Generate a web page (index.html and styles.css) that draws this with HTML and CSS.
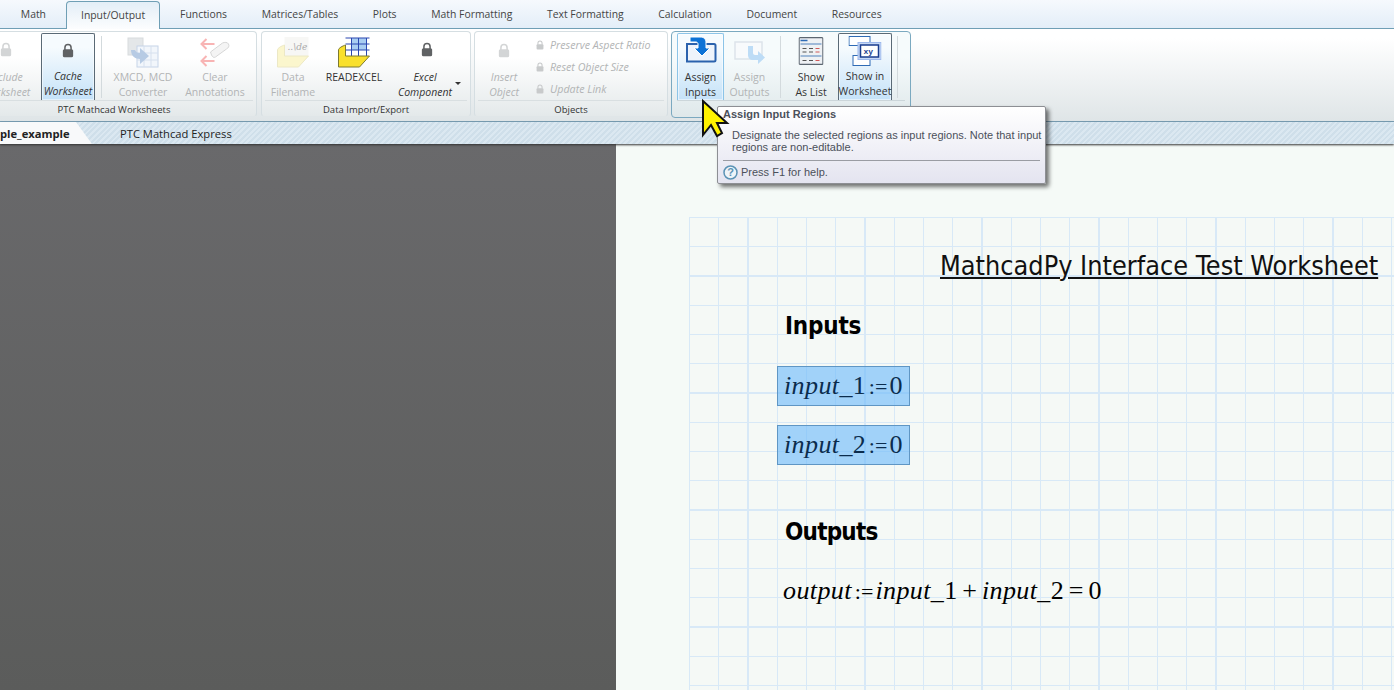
FILE: index.html
```html
<!DOCTYPE html>
<html lang="en">
<head>
<meta charset="utf-8">
<title>PTC Mathcad Express</title>
<link rel="stylesheet" href="styles.css">
</head>
<body>
<svg class="defs" width="0" height="0" aria-hidden="true">
  <symbol id="lock" viewBox="0 0 14 17">
    <path d="M3.4 8V5.2a3.6 3.6 0 0 1 7.2 0V8" fill="none" stroke="currentColor" stroke-width="1.8"/>
    <rect x="1" y="7" width="12" height="9.5" rx="1.8" fill="currentColor"/>
  </symbol>
</svg>
<div class="app">
  <nav class="tabs">
    <span class="tab">Math</span>
    <span class="tab active">Input/Output</span>
    <span class="tab">Functions</span>
    <span class="tab">Matrices/Tables</span>
    <span class="tab">Plots</span>
    <span class="tab">Math Formatting</span>
    <span class="tab">Text Formatting</span>
    <span class="tab">Calculation</span>
    <span class="tab">Document</span>
    <span class="tab">Resources</span>
  </nav>

  <section class="ribbon">
    <div class="group g1">
      <div class="controls">
        <div class="btn w-include off em"><svg class="lock"><use href="#lock"/></svg><span>Include<br>Worksheet</span></div>
        <div class="btn w-cache pressed em"><svg class="lock dark"><use href="#lock"/></svg><span>Cache<br>Worksheet</span></div>
        <i class="sep"></i>
        <div class="btn w-xmcd off">
          <svg class="icon" width="32" height="31" viewBox="0 0 32 31">
            <rect x="1" y="1" width="15" height="17" fill="#e4e7e9" stroke="#d8dbdd"/>
            <rect x="10" y="9" width="21" height="21" fill="#f2f6fb" stroke="#c6d4e8"/>
            <path d="M17 9v21M24 9v21M10 16h21M10 23h21" stroke="#d6e0ee"/>
            <path d="M4 13c0 6 4 9 9 9v5l9-8-9-8v5c-3 0-4-1-5-3z" fill="#b7cbe4"/>
          </svg>
          <span>XMCD, MCD<br>Converter</span>
        </div>
        <div class="btn w-clear off">
          <svg class="icon" width="31" height="30" viewBox="0 0 31 30">
            <path d="M15 7H2m5-5-5 5 5 5M15 24H2m5-5-5 5 5 5" fill="none" stroke="#f8b4b4" stroke-width="2"/>
            <path d="M11 15 23 6c2-1 5-1 6 1s0 4-2 5L16 20c-2 1-3 0-4-2z" fill="#f4f4f4" stroke="#d6d6d6"/>
          </svg>
          <span>Clear<br>Annotations</span>
        </div>
      </div>
      <div class="glabel shift">PTC Mathcad Worksheets</div>
    </div>

    <div class="group g2">
      <div class="controls">
        <div class="btn w-data off">
          <svg class="icon" width="33" height="31" viewBox="0 0 33 31">
            <path d="M8 0h24v19H8z" fill="#f7f7f5"/>
            <text x="11" y="13" class="icon-text">..\de</text>
            <path d="M1 13c0-2 4-4 7-5v11h24l-10 11H1z" fill="#fbf6cd" stroke="#ece8c6"/>
          </svg>
          <span>Data<br>Filename</span>
        </div>
        <div class="btn w-read">
          <svg class="icon" width="33" height="31" viewBox="0 0 33 31">
            <rect x="8" y="1" width="24" height="18" fill="#fff"/>
            <rect x="14" y="1" width="15" height="12" fill="#a9cdf2"/>
            <path d="M8 1h24M8 7h24M8 13h24M14 1v18M21 1v18M29 1v18" stroke="#2a47b0" stroke-width="1"/>
            <path d="M1 13c0-2 4-4 7-5v11h24l-10 11H1z" fill="#f9e02c" stroke="#7d7a30"/>
          </svg>
          <span>READEXCEL<br>&nbsp;</span>
        </div>
        <div class="btn w-excel em"><svg class="lock dark"><use href="#lock"/></svg><span>Excel<br>Component</span><b class="caret"></b></div>
      </div>
      <div class="glabel">Data Import/Export</div>
    </div>

    <div class="group g3">
      <div class="controls">
        <div class="btn w-insert off em"><svg class="lock low"><use href="#lock"/></svg><span>Insert<br>Object</span></div>
        <ul class="minis">
          <li><svg class="mini-lock"><use href="#lock"/></svg>Preserve Aspect Ratio</li>
          <li><svg class="mini-lock"><use href="#lock"/></svg>Reset Object Size</li>
          <li><svg class="mini-lock"><use href="#lock"/></svg>Update Link</li>
        </ul>
      </div>
      <div class="glabel">Objects</div>
    </div>

    <div class="group g4">
      <div class="controls">
        <div class="btn w-assign hover">
          <svg class="icon up" width="32" height="27" viewBox="0 0 32 27">
            <path d="M2 8h27c1 0 1.500 .5 1.500 1.500V24c0 1-.5 1.500-1.500 1.500H2z" fill="#eef4fb" stroke="#2b62ad" stroke-width="2"/>
            <path d="M5 1h10c4 0 6 2 6 6v5h4l-8 8-8-8h4V8c0-1-1-2-2-2H5z" fill="#0d72d6" stroke="#fff"/>
          </svg>
          <span>Assign<br>Inputs</span>
        </div>
        <div class="btn w-assign off">
          <svg class="icon" width="32" height="27" viewBox="0 0 32 27">
            <rect x="1" y="5" width="27" height="17" fill="#f8fafc" stroke="#dde4ea" stroke-width="1.500"/>
            <path d="M14 9h5v7c0 1 1 2 2 2h3v-4l7 6.500-7 6.500v-4h-5c-3 0-5-2-5-5z" fill="#bddcf6"/>
          </svg>
          <span>Assign<br>Outputs</span>
        </div>
        <i class="sep s2"></i>
        <div class="btn w-list">
          <svg class="icon" width="25" height="28" viewBox="0 0 25 28">
            <rect x=".6" y=".6" width="23.800" height="26.800" rx="1" fill="#eef1f4" stroke="#5c6670" stroke-width="1.200"/>
            <path d="M2 3.500h7" stroke="#2f6bb5" stroke-width="1.300"/>
            <path d="M2 7h21M2 19h21" stroke="#9fb9d8" stroke-width="2"/>
            <path d="M4 11.500h4M10.500 11.500h4M4 15h4M10.500 15h4M4 23.500h4M10.500 23.500h4" stroke="#555" stroke-width="1.100"/>
            <path d="M17 11.500h4M17 15h4M17 23.500h4" stroke="#d05a5a" stroke-width="1.100"/>
          </svg>
          <span>Show<br>As List</span>
        </div>
        <div class="btn w-show pressed">
          <svg class="icon up" width="33" height="30" viewBox="0 0 33 30">
            <rect x=".5" y=".5" width="21" height="9" fill="#fff" stroke="#2f6bb5"/>
            <rect x="4.500" y="19.500" width="17" height="10" fill="#fff" stroke="#2f6bb5"/>
            <rect x="9.500" y="6.500" width="23" height="17" fill="#c6d8f5" stroke="#9db8ec"/>
            <rect x="12" y="9" width="18" height="12" fill="#fff" stroke="#1a3d8f" stroke-width="1.500"/>
            <text x="15" y="18" class="xy">xy</text>
          </svg>
          <span>Show in<br>Worksheet</span>
        </div>
        <i class="sep s3"></i>
      </div>
    </div>
  </section>

  <div class="docbar">
    <span class="doctab">ple_example</span>
    <span class="docname">PTC Mathcad Express</span>
  </div>

  <main class="workspace">
    <div class="gutter"></div>
    <div class="page">
      <div class="sheet">
        <div class="region title">MathcadPy Interface Test Worksheet</div>
        <div class="region h h-in">Inputs</div>
        <div class="region calc c1"><em>input_</em>1<span class="def">:=</span>0</div>
        <div class="region calc c2"><em>input_</em>2<span class="def">:=</span>0</div>
        <div class="region h h-out">Outputs</div>
        <div class="region expr"><em>output</em><span class="def">:=</span><em>input_</em>1<span class="op">+</span><em>input_</em>2<span class="op">=</span>0</div>
      </div>
    </div>
  </main>

  <aside class="tooltip">
    <div class="tip-title">Assign Input Regions</div>
    <p class="tip-body">Designate the selected regions as input regions. Note that input regions are non-editable.</p>
    <div class="tip-help">
      <svg width="15" height="15" viewBox="0 0 15 15"><circle cx="7.500" cy="7.500" r="6.500" fill="#eef4f8" stroke="#5b93b5" stroke-width="1.500"/><text x="7.500" y="11" class="q">?</text></svg>
      Press F1 for help.
    </div>
  </aside>

  <svg class="cursor" width="30" height="42" viewBox="0 0 30 42">
    <path d="M3 3v34l8-10 6 11 5-3-5-10h10z" fill="#fff200" stroke="#111" stroke-width="2"/>
  </svg>
</div>
</body>
</html>
```
FILE: styles.css
```css
* { box-sizing: border-box; }
html, body { margin: 0; padding: 0; }
body { font-family: "Open Sans", "Noto Sans", sans-serif; color: #333; overflow: hidden; }
.defs { position: absolute; }

.app { position: relative; width: 1394px; height: 690px; overflow: hidden; display: flex; flex-direction: column; background: #f4f9f6; }

/* top tabs */
.tabs { flex: 0 0 29px; min-height: 0; height: 29px; display: flex; padding: 1px 0 0 3.5px; background: linear-gradient(#f6f9fd, #e3eef8); border-bottom: 1px solid #6f9fb5; font-size: 10.4px; color: #444; z-index: 1; }
.tab { height: 27px; margin: 0 2.5px; padding: 0 14.8px; line-height: 26px; white-space: nowrap; }
.tab.active { height: 28px; border: 1px solid #6f9fb5; border-bottom: 0; border-radius: 4px 4px 0 0; background: linear-gradient(#e3eef7, #fcfdfe); padding: 0 14.2px; }

/* ribbon */
.ribbon { flex: 0 0 93px; min-height: 0; display: flex; align-items: flex-start; padding-top: 2px; background: linear-gradient(#fff 10%, #dfe5e7); border-bottom: 1px solid #7ba2b8; }
.group { height: 86px; display: flex; flex-direction: column; border: 1px solid #d5dee2; border-bottom-color: #e0e6e8; border-radius: 4px; background: linear-gradient(#fff 30%, #e4e9ea); }
.g1 { width: 278px; margin-left: -21px; }
.g2 { width: 210px; margin-left: 4px; }
.g3 { width: 194px; margin-left: 3px; }
.g4 { width: 240px; margin-left: 3px; height: 87px; border-color: #7ba9c0; background: linear-gradient(#f6fbfc 30%, #dfe8ea); }
.controls { flex: 0 0 69px; min-height: 0; display: flex; align-items: stretch; padding-top: 1px; border-bottom: 1px solid #d9dfe1; margin: 0 3px; }
.g4 .controls { border-bottom-color: #ccd6da; margin: 0 5px; }
.glabel { flex: 1; text-align: center; font-size: 9.5px; line-height: 18px; color: #333; }
.glabel.shift { padding-right: 8px; }

.btn { position: relative; display: flex; flex-direction: column; align-items: center; justify-content: flex-end; font-size: 10.5px; line-height: 15px; text-align: center; color: #333; white-space: nowrap; }
.btn span { display: block; }
.btn.off { color: #b2b4b5; }
.btn.em { font-style: italic; }
.btn.pressed { border: 1px solid #5a6a76; border-bottom: 0; border-radius: 2px 2px 0 0; padding-bottom: 1px; background: linear-gradient(#f6fbfe 20%, #c5e2f8); box-shadow: inset 0 0 0 1px rgba(255,255,255,.5); }
.btn.hover { border: 1px solid #8cc4e8; border-bottom: 0; border-radius: 2px 2px 0 0; background: linear-gradient(#f6fbfe 20%, #c5e2f8); box-shadow: inset 0 0 0 1px rgba(255,255,255,.5); }

.w-include { width: 46px; }
.w-cache { width: 54px; margin-left: 12px; }
.sep { flex: 0 0 1px; margin: 3px 0 2px 6px; background: #d3dadd; }
.w-xmcd { width: 64px; margin-left: 9px; }
.w-clear { width: 68px; margin-left: 6px; }
.w-data { width: 54px; margin-left: 1px; }
.w-read { width: 62px; margin-left: 3px; }
.w-excel { width: 68px; margin-left: 6px; }
.w-insert { width: 46px; margin-left: 3px; }
.w-assign { width: 47px; margin-right: 2px; }
.s2 { margin: 3px 0 2px 5px; }
.w-list { width: 52px; margin-left: 4px; }
.w-show { width: 54px; margin-left: 1px; }
.s3 { margin: 3px 0 2px 5px; }

.icon { flex: none; position: absolute; top: 4px; left: 50%; transform: translateX(-50%); }
.icon.up { top: 2px; }
.lock { position: absolute; top: 9px; left: 50%; width: 12px; height: 15px; margin-left: -6px; color: #d3d5d6; }
.lock.low { top: 10px; }
.lock.dark { color: #606264; }
.w-excel .lock { margin-left: -4px; }
.caret { position: absolute; right: -2px; bottom: 15px; width: 0; height: 0; border: 3px solid transparent; border-top-color: #333; border-bottom: 0; }
.icon-text { font: italic 9px "DejaVu Serif", serif; fill: #aaa; }
.xy { font: 700 8px "Liberation Mono", monospace; fill: #1a3d8f; }

.minis { list-style: none; margin: 0 0 0 9px; padding: 4px 0 0; height: 60px; font-size: 10.7px; font-style: italic; color: #b2b4b5; }
.minis li { height: 22px; line-height: 16px; display: flex; align-items: flex-start; white-space: nowrap; }
.mini-lock { width: 8px; height: 10px; margin: 3px 6px 0 0; color: #c8cacb; flex: none; }

/* doc bar */
.docbar { flex: 0 0 22px; min-height: 0; height: 22px; display: flex; align-items: flex-start; background: repeating-linear-gradient(135deg, #dbe8f1 0 2px, #cfdfea 2px 4px); font-size: 11.2px; color: #222; position: relative; box-shadow: 0 1px 2px #333; z-index: 1; }
.doctab { width: 92px; height: 22px; padding-top: 4px; font-weight: 700; line-height: 16px; background: #f8f9fa; clip-path: polygon(0 0, 76px 0, 92px 100%, 0 100%); }
.docname { margin-left: 28px; padding-top: 4px; line-height: 16px; }

/* workspace */
.workspace { flex: 1; display: flex; min-height: 0; }
.gutter { flex: 0 0 616px; background: linear-gradient(#69696b, #5b5c5b); }
.page { flex: 1; background: #f5faf7; padding: 73px 0 0 73px; }
.sheet { position: relative; height: 473px; background-color: #f5f9f6;
  background-image:
    repeating-linear-gradient(90deg, #d8e9f7 0 1.2px, transparent 1.2px 29.25px),
    repeating-linear-gradient(180deg, #d8e9f7 0 1.2px, transparent 1.2px 29.25px); }

.region { position: absolute; white-space: nowrap; color: #000; }
.title { left: 251px; top: 29px; font: 26.8px/40px "DejaVu Sans Condensed", "DejaVu Sans", sans-serif; text-decoration: underline; text-decoration-thickness: 2px; text-underline-offset: 2px; color: #111; }
.h { font: 700 24px/30px "DejaVu Sans Condensed", "DejaVu Sans", sans-serif; left: 96px; letter-spacing: -.2px; }
.h-in { top: 94px; }
.h-out { top: 300px; letter-spacing: -.8px; }
.calc, .expr { font: 26px/38px "Liberation Serif", serif; }
.calc em, .expr em { font-style: italic; letter-spacing: .4px; }
.def { font-size: 22px; margin: 0 2px 0 3px; }
.op { margin: 0 5px; }
.calc { left: 88px; width: 133px; height: 40px; padding-left: 6px; border: 1px solid #5f96c4; background: rgba(110, 185, 250, .62); color: #0b2c4d; }
.c1 { top: 149px; }
.c2 { top: 208px; }
.expr { left: 94px; top: 355px; }

/* tooltip */
.tooltip { position: absolute; left: 717px; top: 106px; width: 329px; height: 78px; padding: 0 5px; border: 1px solid #8d8f94; border-radius: 2px; background: linear-gradient(#fff, #e4e4f0); box-shadow: 3px 3px 4px rgba(0,0,0,.55); font: 11px/12px "Liberation Sans", sans-serif; color: #4b505a; z-index: 3; }
.tip-title { font-weight: 700; line-height: 14px; }
.tip-body { margin: 8px -3px 0 9px; }
.tip-help { display: flex; align-items: center; gap: 3px; margin-top: 7px; padding-top: 1px; border-top: 1px solid #9a9ca3; height: 22px; }
.q { font: 700 11px "Liberation Sans", sans-serif; fill: #5b93b5; text-anchor: middle; }

.cursor { position: absolute; left: 700px; top: 98px; z-index: 4; }
```
